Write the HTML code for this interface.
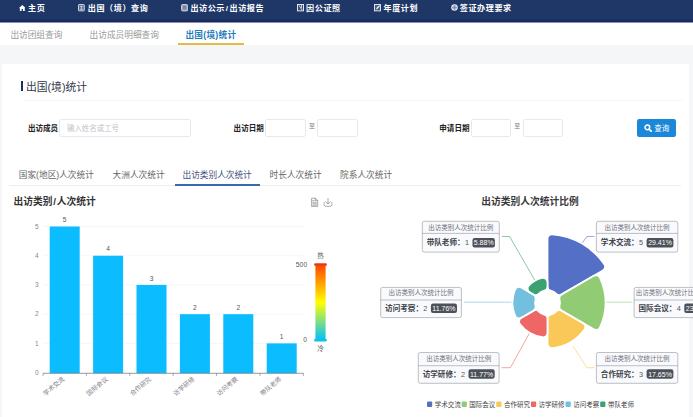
<!DOCTYPE html>
<html lang="zh-CN">
<head>
<meta charset="utf-8">
<title>出国(境)统计</title>
<style>
*{box-sizing:border-box;margin:0;padding:0}
html,body{width:693px;height:417px;overflow:hidden;background:#f5f6f8;font-family:"Liberation Sans","Noto Sans CJK SC",sans-serif;color:#333}
.abs{position:absolute;white-space:nowrap}
#nav{position:absolute;left:0;top:0;width:693px;height:22px;background:#1e3767;border-bottom:2px solid #1b2b5d}
#nav .it{position:absolute;top:0;height:17px;line-height:18.2px;color:#fff;font-weight:bold;font-size:8.1px;letter-spacing:0.56px;white-space:nowrap}
#nav svg{position:absolute}
#tabs{position:absolute;left:0;top:22.4px;width:693px;height:23px;background:#fff}
#tabs .t{position:absolute;top:0;height:23px;line-height:27.2px;font-size:8.66px;color:#999;white-space:nowrap}
#tabs .t.on{color:#1f7cbc;font-weight:bold;letter-spacing:0.28px;line-height:27.2px}
#tabs .ul{position:absolute;left:177.6px;top:20.4px;width:66.2px;height:2.3px;background:#e5bb48}
#card{position:absolute;left:1.9px;top:63.8px;width:687.6px;height:360px;background:#fff}
.lbl{position:absolute;font-size:7.55px;font-weight:bold;color:#222;height:18px;line-height:18px;top:120px;white-space:nowrap}
.inp{position:absolute;top:119.2px;height:18px;border:1px solid #e8e9ec;border-radius:2.2px;background:#fff}
.zhi{position:absolute;top:122.2px;font-size:6px;color:#808080;line-height:9px}
.st{position:absolute;top:166.8px;height:18px;line-height:17px;font-size:8.66px;color:#666;white-space:nowrap}
.st.on{color:#3f5080}
</style>
</head>
<body>
<div id="nav">
  <svg style="left:18.8px;top:5px" width="6.6" height="6" viewBox="0 0 16 14.5"><path d="M8 0 L0 7.3 H2 V14.5 H6.4 V9.6 H9.6 V14.5 H14 V7.3 H16 Z" fill="#fff"/></svg>
  <div class="it" style="left:28px">主页</div>
  <svg style="left:77.8px;top:4.2px" width="6.8" height="7.4" viewBox="0 0 12 13"><rect x="0.9" y="0.9" width="10.2" height="11.2" rx="1" fill="rgba(255,255,255,0.28)" stroke="#e6eaf2" stroke-width="1.5"/><path d="M3.4 4.2 H8.6 M6 4.2 V9.4 M3.4 9.4 H8.6" stroke="#e6eaf2" stroke-width="1.2" fill="none"/></svg>
  <div class="it" style="left:87.8px">出国（境）查询</div>
  <svg style="left:180.8px;top:4.2px" width="7.2" height="7.4" viewBox="0 0 12 12.4"><rect x="0.8" y="0.8" width="10.4" height="10.8" rx="2" fill="rgba(255,255,255,0.55)" stroke="#dfe4ee" stroke-width="1.4"/><path d="M3.4 4.2 H8.6 M3.4 6.3 H8.6 M3.4 8.4 H8.6" stroke="#4a5f8c" stroke-width="0.9" fill="none"/></svg>
  <div class="it" style="left:190.4px">出访公示<span style="margin:0 0.9px 0 0.8px">/</span>出访报告</div>
  <svg style="left:296.6px;top:4.2px" width="7" height="7.4" viewBox="0 0 12 12.7"><rect x="0.9" y="0.9" width="10.2" height="10.9" fill="rgba(255,255,255,0.12)" stroke="#eef1f6" stroke-width="1.6"/><path d="M3.6 2.5 L8.8 10.5 M7.6 1.5 V7" stroke="#eef1f6" stroke-width="1.4" fill="none"/></svg>
  <div class="it" style="left:306.1px">因公证照</div>
  <svg style="left:373.7px;top:4.2px" width="7" height="7.4" viewBox="0 0 12 12.7"><rect x="0.9" y="0.9" width="10.2" height="10.9" fill="rgba(255,255,255,0.2)" stroke="#e6eaf2" stroke-width="1.6"/><path d="M3.4 9.3 L4.4 6.4 L8.8 2 L10.4 3.6 L6.2 8.2 Z" fill="#eef1f6"/></svg>
  <div class="it" style="left:383.5px">年度计划</div>
  <svg style="left:451px;top:4.4px" width="7" height="7" viewBox="0 0 12 12"><circle cx="6" cy="6" r="5.6" fill="#e9edf4"/><circle cx="6" cy="6" r="3.1" fill="none" stroke="#3d5385" stroke-width="0.9"/><path d="M2.9 6 H9.1 M6 2.9 V9.1" stroke="#3d5385" stroke-width="0.8"/></svg>
  <div class="it" style="left:459.8px">签证办理要求</div>
</div>
<div id="tabs">
  <div class="t" style="left:10.4px">出访团组查询</div>
  <div class="t" style="left:89.6px">出访成员明细查询</div>
  <div class="t on" style="left:185.4px">出国(境)统计</div>
  <div class="ul"></div>
</div>
<div class="abs" style="left:0;top:19px;width:693px;height:1px;background:#1d3263"></div>
<div class="abs" style="left:0;top:22px;width:693px;height:1px;background:#8790b0"></div>
<div id="card"></div>

<!-- section title -->
<div class="abs" style="left:21.3px;top:81px;width:2.1px;height:10.1px;background:#1f2f5c"></div>
<div class="abs" style="left:25.9px;top:79px;height:17px;line-height:17px;font-size:10.8px;color:#34394a">出国(境)统计</div>
<div class="abs" style="left:23px;top:99.9px;width:660px;height:1px;background:#f5f6f8"></div>

<!-- form -->
<div class="lbl" style="left:27.9px">出访成员</div>
<div class="inp" style="left:59.4px;width:132px"><span style="position:absolute;left:6.6px;top:0;line-height:18.2px;font-size:7.45px;color:#c0c4cc;white-space:nowrap">输入姓名或工号</span></div>
<div class="lbl" style="left:233.6px">出访日期</div>
<div class="inp" style="left:265.3px;width:40.4px"></div>
<div class="zhi" style="left:309px">至</div>
<div class="inp" style="left:317.3px;width:40.4px"></div>
<div class="lbl" style="left:439.3px">申请日期</div>
<div class="inp" style="left:470.6px;width:40.2px"></div>
<div class="zhi" style="left:514.2px">至</div>
<div class="inp" style="left:522.8px;width:40.2px"></div>
<div class="abs" style="left:636.9px;top:119.3px;width:39.5px;height:17.8px;background:#1b87d8;border-radius:2.2px"></div>
<svg class="abs" style="left:643.8px;top:123.8px" width="8.4" height="8.4" viewBox="0 0 14 14"><circle cx="5.6" cy="5.6" r="3.9" fill="none" stroke="#fff" stroke-width="2.5"/><path d="M8.8 8.8 L12.6 12.6" stroke="#fff" stroke-width="2.9" stroke-linecap="round"/></svg>
<div class="abs" style="left:654.3px;top:119.3px;height:17.8px;line-height:19px;font-size:7.5px;color:#fff">查询</div>

<!-- sub tabs -->
<div class="abs" style="left:8.7px;top:185px;width:672.5px;height:1px;background:#eceef1"></div>
<div class="st" style="left:18.8px">国家(地区)人次统计</div>
<div class="st" style="left:112.6px">大洲人次统计</div>
<div class="st on" style="left:182.5px">出访类别人次统计</div>
<div class="st" style="left:269.6px">时长人次统计</div>
<div class="st" style="left:340.1px">院系人次统计</div>
<div class="abs" style="left:174.6px;top:183.9px;width:85.2px;height:2px;background:#3b67b3"></div>

<!-- CHARTS -->
<svg id="charts" class="abs" style="left:0;top:0" width="693" height="417" viewBox="0 0 693 417" font-family="'Liberation Sans','Noto Sans CJK SC',sans-serif">
<text x="13.6" y="204.8" font-size="9.74" font-weight="bold" fill="#333">出访类别<tspan dx="0.7">/</tspan><tspan dx="0.8">人次统计</tspan></text>
<g fill="none" stroke="#858585" stroke-width="0.7"><path d="M311.6 198.2 H315.4 L317.7 200.5 V206.4 H311.6 Z M315.4 198.2 V200.5 H317.7 M312.4 200.6 H314.6 M312.4 202.3 H316.8 M312.4 203.8 H316.8 M312.4 205.2 H316.8"/><path d="M328 198 V204 M325.3 201.4 L328 204.1 L330.7 201.4 M324.1 202.2 V204.6 Q324.1 206.3 325.8 206.3 H330.2 Q331.9 206.3 331.9 204.6 V202.2"/></g>
<path d="M43.0 343.38 H303.6" stroke="#eef0f4" stroke-width="0.6"/>
<path d="M43.0 314.16 H303.6" stroke="#eef0f4" stroke-width="0.6"/>
<path d="M43.0 284.94 H303.6" stroke="#eef0f4" stroke-width="0.6"/>
<path d="M43.0 255.72 H303.6" stroke="#eef0f4" stroke-width="0.6"/>
<path d="M43.0 226.50 H303.6" stroke="#eef0f4" stroke-width="0.6"/>
<text x="38.6" y="374.90" font-size="6.5" fill="#85888f" text-anchor="end">0</text>
<text x="38.6" y="345.68" font-size="6.5" fill="#85888f" text-anchor="end">1</text>
<text x="38.6" y="316.46" font-size="6.5" fill="#85888f" text-anchor="end">2</text>
<text x="38.6" y="287.24" font-size="6.5" fill="#85888f" text-anchor="end">3</text>
<text x="38.6" y="258.02" font-size="6.5" fill="#85888f" text-anchor="end">4</text>
<text x="38.6" y="228.80" font-size="6.5" fill="#85888f" text-anchor="end">5</text>
<rect x="49.70" y="226.50" width="30.0" height="146.70" fill="#0bbdfe"/>
<text x="64.70" y="222.20" font-size="6.6" fill="#555" text-anchor="middle">5</text>
<text transform="translate(63.80,378.60) rotate(-40)" font-size="6.35" fill="#7d8088" text-anchor="end" dominant-baseline="middle">学术交流</text>
<rect x="93.10" y="255.72" width="30.0" height="117.48" fill="#0bbdfe"/>
<text x="108.10" y="251.42" font-size="6.6" fill="#555" text-anchor="middle">4</text>
<text transform="translate(107.20,378.60) rotate(-40)" font-size="6.35" fill="#7d8088" text-anchor="end" dominant-baseline="middle">国际会议</text>
<rect x="136.50" y="284.94" width="30.0" height="88.26" fill="#0bbdfe"/>
<text x="151.50" y="280.64" font-size="6.6" fill="#555" text-anchor="middle">3</text>
<text transform="translate(150.60,378.60) rotate(-40)" font-size="6.35" fill="#7d8088" text-anchor="end" dominant-baseline="middle">合作研究</text>
<rect x="179.90" y="314.16" width="30.0" height="59.04" fill="#0bbdfe"/>
<text x="194.90" y="309.86" font-size="6.6" fill="#555" text-anchor="middle">2</text>
<text transform="translate(194.00,378.60) rotate(-40)" font-size="6.35" fill="#7d8088" text-anchor="end" dominant-baseline="middle">访学研修</text>
<rect x="223.30" y="314.16" width="30.0" height="59.04" fill="#0bbdfe"/>
<text x="238.30" y="309.86" font-size="6.6" fill="#555" text-anchor="middle">2</text>
<text transform="translate(237.40,378.60) rotate(-40)" font-size="6.35" fill="#7d8088" text-anchor="end" dominant-baseline="middle">访问考察</text>
<rect x="266.70" y="343.38" width="30.0" height="29.82" fill="#0bbdfe"/>
<text x="281.70" y="339.08" font-size="6.6" fill="#555" text-anchor="middle">1</text>
<text transform="translate(280.80,378.60) rotate(-40)" font-size="6.35" fill="#7d8088" text-anchor="end" dominant-baseline="middle">带队老师</text>
<path d="M43.0 373.3 H303.6" stroke="#6e7079" stroke-width="0.7"/>
<path d="M43.00 373.3 v2.6" stroke="#6e7079" stroke-width="0.6"/>
<path d="M86.40 373.3 v2.6" stroke="#6e7079" stroke-width="0.6"/>
<path d="M129.80 373.3 v2.6" stroke="#6e7079" stroke-width="0.6"/>
<path d="M173.20 373.3 v2.6" stroke="#6e7079" stroke-width="0.6"/>
<path d="M216.60 373.3 v2.6" stroke="#6e7079" stroke-width="0.6"/>
<path d="M260.00 373.3 v2.6" stroke="#6e7079" stroke-width="0.6"/>
<path d="M303.40 373.3 v2.6" stroke="#6e7079" stroke-width="0.6"/>
<defs><linearGradient id="vm" x1="0" y1="0" x2="0" y2="1"><stop offset="0" stop-color="#ff4500"/><stop offset="0.5" stop-color="#ffff00"/><stop offset="1" stop-color="#00bfff"/></linearGradient></defs>
<rect x="315.4" y="264.4" width="10.2" height="76" fill="url(#vm)"/>
<rect x="314.1" y="263.3" width="12.8" height="2.5" rx="1.1" fill="#ea3a1c"/>
<rect x="314.1" y="338.9" width="12.8" height="2.5" rx="1.1" fill="#12bfe6"/>
<text x="320.6" y="257.9" font-size="6.5" fill="#555" text-anchor="middle">热</text>
<text x="320.6" y="350.6" font-size="6.5" fill="#555" text-anchor="middle">冷</text>
<text x="307.2" y="266.7" font-size="6.8" fill="#5a5a5a" text-anchor="end">500</text>
<text x="307" y="341.8" font-size="6.8" fill="#5a5a5a" text-anchor="end">0</text>
<text x="530" y="204.8" font-size="9.74" font-weight="bold" fill="#3a3a3a" text-anchor="middle">出访类别人次统计比例</text>
<polyline points="535.5,281.5 509.6,236.5 502.0,236.5" fill="none" stroke="#3ba272" stroke-width="0.6"/>
<polyline points="512.5,302.2 464.0,302.2" fill="none" stroke="#73c0de" stroke-width="0.6"/>
<polyline points="531.5,329.5 510.4,367.7 501.6,367.7" fill="none" stroke="#ee6666" stroke-width="0.6"/>
<polyline points="573.0,346.0 586.9,367.7 594.6,367.7" fill="none" stroke="#fac858" stroke-width="0.6"/>
<polyline points="604.7,302.2 632.5,302.2" fill="none" stroke="#91cc75" stroke-width="0.6"/>
<polyline points="581.5,244.0 586.9,236.5 594.4,236.5" fill="none" stroke="#5470c6" stroke-width="0.6"/>
<path d="M547.50 286.59 L547.50 238.65 A4.40 4.40 0 0 1 552.20 234.26 A68.50 68.50 0 0 1 604.33 264.36 A4.40 4.40 0 0 1 602.88 270.63 L561.36 294.60 A4.13 4.13 0 0 1 556.35 293.91 A12.40 12.40 0 0 0 550.60 290.59 A4.13 4.13 0 0 1 547.50 286.59 Z" fill="#5470c6" stroke="#fff" stroke-width="1.8" stroke-linejoin="round"/>
<path d="M561.36 294.60 L593.85 275.84 A4.40 4.40 0 0 1 600.03 277.77 A58.10 58.10 0 0 1 600.03 327.43 A4.40 4.40 0 0 1 593.85 329.36 L561.36 310.60 A4.13 4.13 0 0 1 559.45 305.92 A12.40 12.40 0 0 0 559.45 299.28 A4.13 4.13 0 0 1 561.36 294.60 Z" fill="#91cc75" stroke="#fff" stroke-width="1.8" stroke-linejoin="round"/>
<path d="M561.36 310.60 L583.15 323.18 A4.40 4.40 0 0 1 584.51 329.59 A45.80 45.80 0 0 1 552.37 348.14 A4.40 4.40 0 0 1 547.50 343.77 L547.50 318.61 A4.13 4.13 0 0 1 550.60 314.61 A12.40 12.40 0 0 0 556.35 311.29 A4.13 4.13 0 0 1 561.36 310.60 Z" fill="#fac858" stroke="#fff" stroke-width="1.8" stroke-linejoin="round"/>
<path d="M547.50 318.61 L547.50 332.88 A4.40 4.40 0 0 1 542.47 337.24 A35.00 35.00 0 0 1 520.02 324.28 A4.40 4.40 0 0 1 521.28 317.74 L533.64 310.60 A4.13 4.13 0 0 1 538.65 311.29 A12.40 12.40 0 0 0 544.40 314.61 A4.13 4.13 0 0 1 547.50 318.61 Z" fill="#ee6666" stroke="#fff" stroke-width="1.8" stroke-linejoin="round"/>
<path d="M533.64 310.60 L521.28 317.74 A4.40 4.40 0 0 1 514.99 315.56 A35.00 35.00 0 0 1 514.99 289.64 A4.40 4.40 0 0 1 521.28 287.46 L533.64 294.60 A4.13 4.13 0 0 1 535.55 299.28 A12.40 12.40 0 0 0 535.55 305.92 A4.13 4.13 0 0 1 533.64 310.60 Z" fill="#73c0de" stroke="#fff" stroke-width="1.8" stroke-linejoin="round"/>
<path d="M533.64 294.60 L529.81 292.38 A4.40 4.40 0 0 1 528.74 285.62 A25.30 25.30 0 0 1 542.17 277.87 A4.40 4.40 0 0 1 547.50 282.17 L547.50 286.59 A4.13 4.13 0 0 1 544.40 290.59 A12.40 12.40 0 0 0 538.65 293.91 A4.13 4.13 0 0 1 533.64 294.60 Z" fill="#3ba272" stroke="#fff" stroke-width="1.8" stroke-linejoin="round"/>
<rect x="596.4" y="221.3" width="81.4" height="30.8" rx="2" fill="#f9fafd" stroke="#8c8d8e" stroke-width="0.55"/>
<path d="M596.4 233.4 h81.4" stroke="#8c8d8e" stroke-width="0.55"/>
<text x="637.1" y="229.6" font-size="6.5" fill="#6e7079" text-anchor="middle">出访类别人次统计比例</text>
<text x="600.8" y="245.3" font-size="7.58" font-weight="bold" fill="#3e4148">学术交流：</text>
<text x="639.0" y="245.3" font-size="7.3" fill="#555">5</text>
<rect x="646.6" y="238.1" width="26.8" height="9.4" rx="2.1" fill="#4c5058"/>
<text x="660.0" y="245.3" font-size="7" fill="#fff" text-anchor="middle">29.41%</text>
<rect x="634.1" y="287.4" width="81.4" height="30.2" rx="2" fill="#f9fafd" stroke="#8c8d8e" stroke-width="0.55"/>
<path d="M634.1 300.0 h81.4" stroke="#8c8d8e" stroke-width="0.55"/>
<text x="668.2" y="295.1" font-size="6.5" fill="#6e7079" text-anchor="middle">出访类别人次统计比例</text>
<text x="638.5" y="310.8" font-size="7.58" font-weight="bold" fill="#3e4148">国际会议：</text>
<text x="676.7" y="310.8" font-size="7.3" fill="#555">4</text>
<rect x="684.3" y="303.6" width="26.8" height="9.4" rx="2.1" fill="#4c5058"/>
<text x="697.7" y="310.8" font-size="7" fill="#fff" text-anchor="middle">23.53%</text>
<rect x="596.4" y="352.5" width="81.4" height="30.8" rx="2" fill="#f9fafd" stroke="#8c8d8e" stroke-width="0.55"/>
<path d="M596.4 365.7 h81.4" stroke="#8c8d8e" stroke-width="0.55"/>
<text x="637.1" y="360.8" font-size="6.5" fill="#6e7079" text-anchor="middle">出访类别人次统计比例</text>
<text x="600.8" y="376.5" font-size="7.58" font-weight="bold" fill="#3e4148">合作研究：</text>
<text x="639.0" y="376.5" font-size="7.3" fill="#555">3</text>
<rect x="646.6" y="369.3" width="26.8" height="9.4" rx="2.1" fill="#4c5058"/>
<text x="660.0" y="376.5" font-size="7" fill="#fff" text-anchor="middle">17.65%</text>
<rect x="418.3" y="352.5" width="80.8" height="30.8" rx="2" fill="#f9fafd" stroke="#8c8d8e" stroke-width="0.55"/>
<path d="M418.3 365.7 h80.8" stroke="#8c8d8e" stroke-width="0.55"/>
<text x="458.7" y="360.8" font-size="6.5" fill="#6e7079" text-anchor="middle">出访类别人次统计比例</text>
<text x="422.7" y="376.5" font-size="7.58" font-weight="bold" fill="#3e4148">访学研修：</text>
<text x="460.9" y="376.5" font-size="7.3" fill="#555">2</text>
<rect x="468.5" y="369.3" width="26.2" height="9.4" rx="2.1" fill="#4c5058"/>
<text x="481.6" y="376.5" font-size="7" fill="#fff" text-anchor="middle">11.77%</text>
<rect x="380.7" y="287.4" width="80.7" height="30.2" rx="2" fill="#f9fafd" stroke="#8c8d8e" stroke-width="0.55"/>
<path d="M380.7 300.0 h80.7" stroke="#8c8d8e" stroke-width="0.55"/>
<text x="421.1" y="295.1" font-size="6.5" fill="#6e7079" text-anchor="middle">出访类别人次统计比例</text>
<text x="385.1" y="310.8" font-size="7.58" font-weight="bold" fill="#3e4148">访问考察：</text>
<text x="423.3" y="310.8" font-size="7.3" fill="#555">2</text>
<rect x="430.9" y="303.6" width="26.1" height="9.4" rx="2.1" fill="#4c5058"/>
<text x="443.9" y="310.8" font-size="7" fill="#fff" text-anchor="middle">11.76%</text>
<rect x="422.3" y="221.3" width="77.0" height="30.8" rx="2" fill="#f9fafd" stroke="#8c8d8e" stroke-width="0.55"/>
<path d="M422.3 233.4 h77.0" stroke="#8c8d8e" stroke-width="0.55"/>
<text x="460.8" y="229.6" font-size="6.5" fill="#6e7079" text-anchor="middle">出访类别人次统计比例</text>
<text x="426.7" y="245.3" font-size="7.58" font-weight="bold" fill="#3e4148">带队老师：</text>
<text x="464.9" y="245.3" font-size="7.3" fill="#555">1</text>
<rect x="472.5" y="238.1" width="22.4" height="9.4" rx="2.1" fill="#4c5058"/>
<text x="483.7" y="245.3" font-size="7" fill="#fff" text-anchor="middle">5.88%</text>
<rect x="427.00" y="401.6" width="5.2" height="5.4" rx="1" fill="#5470c6"/>
<text x="434.70" y="406.8" font-size="6.5" fill="#444">学术交流</text>
<rect x="461.64" y="401.6" width="5.2" height="5.4" rx="1" fill="#91cc75"/>
<text x="469.34" y="406.8" font-size="6.5" fill="#444">国际会议</text>
<rect x="496.28" y="401.6" width="5.2" height="5.4" rx="1" fill="#fac858"/>
<text x="503.98" y="406.8" font-size="6.5" fill="#444">合作研究</text>
<rect x="530.92" y="401.6" width="5.2" height="5.4" rx="1" fill="#ee6666"/>
<text x="538.62" y="406.8" font-size="6.5" fill="#444">访学研修</text>
<rect x="565.56" y="401.6" width="5.2" height="5.4" rx="1" fill="#73c0de"/>
<text x="573.26" y="406.8" font-size="6.5" fill="#444">访问考察</text>
<rect x="600.20" y="401.6" width="5.2" height="5.4" rx="1" fill="#3ba272"/>
<text x="607.90" y="406.8" font-size="6.5" fill="#444">带队老师</text>
</svg>
</body>
</html>
